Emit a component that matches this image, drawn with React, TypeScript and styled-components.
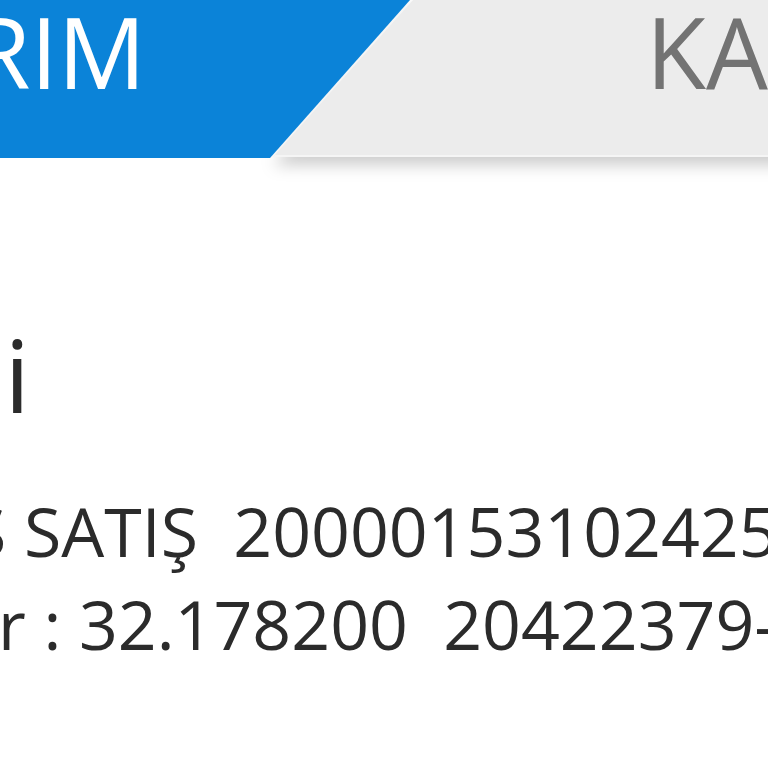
import React from 'react';
import styled, { createGlobalStyle } from 'styled-components';

const GlobalStyle = createGlobalStyle`
    html, body {
        margin: 0;
        padding: 0;
        background: #ffffff;
        overflow: hidden;
    }
    body {
        font-family: "Open Sans", "Noto Sans", "DejaVu Sans", sans-serif;
    }
`;

function App() {
    return (
        <Page>
            <GlobalStyle />
            <TabBar>
                <ActiveTab>
                    <TabLabel $width={146}>AKTARIM</TabLabel>
                </ActiveTab>
                <GrayTabShadow>
                    <GrayTab>
                        <GrayLabel>KAYITLAR</GrayLabel>
                    </GrayTab>
                </GrayTabShadow>
            </TabBar>
            <Content>
                <Heading>
                    <HeadingText>Sipariş Bilgileri</HeadingText>
                </Heading>
                <InfoLine $shift={-31}>{'S SATIŞ  20000153102425'}</InfoLine>
                <InfoLine $shift={-2}>{'r : 32.178200  20422379-1'}</InfoLine>
            </Content>
        </Page>
    );
}

const Page = styled.div`
    width: 768px;
    height: 768px;
    overflow: hidden;
`;

const TabBar = styled.div`
    display: flex;
    height: 158px;
`;

const ActiveTab = styled.div`
    flex: 0 0 410px;
    height: 158px;
    background: #0b83d8;
    clip-path: polygon(0 0, 410px 0, 270px 100%, 0 100%);
    display: flex;
    align-items: flex-start;
    position: relative;
    z-index: 1;
`;

const TabLabel = styled.div<{ $width: number }>`
    width: ${(p) => p.$width}px;
    flex: 0 0 auto;
    display: flex;
    justify-content: flex-end;
    white-space: nowrap;
    color: #ffffff;
    font-size: 98px;
    font-weight: 500;
    line-height: 1;
    padding-top: 2px;
`;

const GrayTabShadow = styled.div`
    flex: 1 0 auto;
    margin-left: -137px;
    filter: drop-shadow(0 8px 8px rgba(0, 0, 0, 0.2));
`;

const GrayTab = styled.div`
    height: 155px;
    background: #ececec;
    border-bottom: 2px solid #f5f5f5;
    clip-path: polygon(140px 0, 100% 0, 100% 100%, 0 100%);
    display: flex;
    padding-left: 373px;
    overflow: hidden;
`;

const GrayLabel = styled.div`
    color: #737373;
    font-size: 98px;
    font-weight: 500;
    line-height: 1;
    padding-top: 2px;
    white-space: nowrap;
`;

const Content = styled.div`
    display: flex;
    flex-direction: column;
    padding-top: 166px;
`;

const Heading = styled.div`
    margin-left: 6px;
    width: 24px;
    height: 160px;
    display: flex;
    justify-content: flex-end;
    overflow: hidden;
`;

const HeadingText = styled.div`
    flex: 0 0 auto;
    white-space: nowrap;
    color: #2b2b2b;
    font-size: 101px;
    line-height: 1;
`;

const InfoLine = styled.div<{ $shift: number }>`
    margin-left: ${(p) => p.$shift}px;
    white-space: pre;
    color: #2b2b2b;
    font-size: 68px;
    line-height: 93px;
`;

export default App;
